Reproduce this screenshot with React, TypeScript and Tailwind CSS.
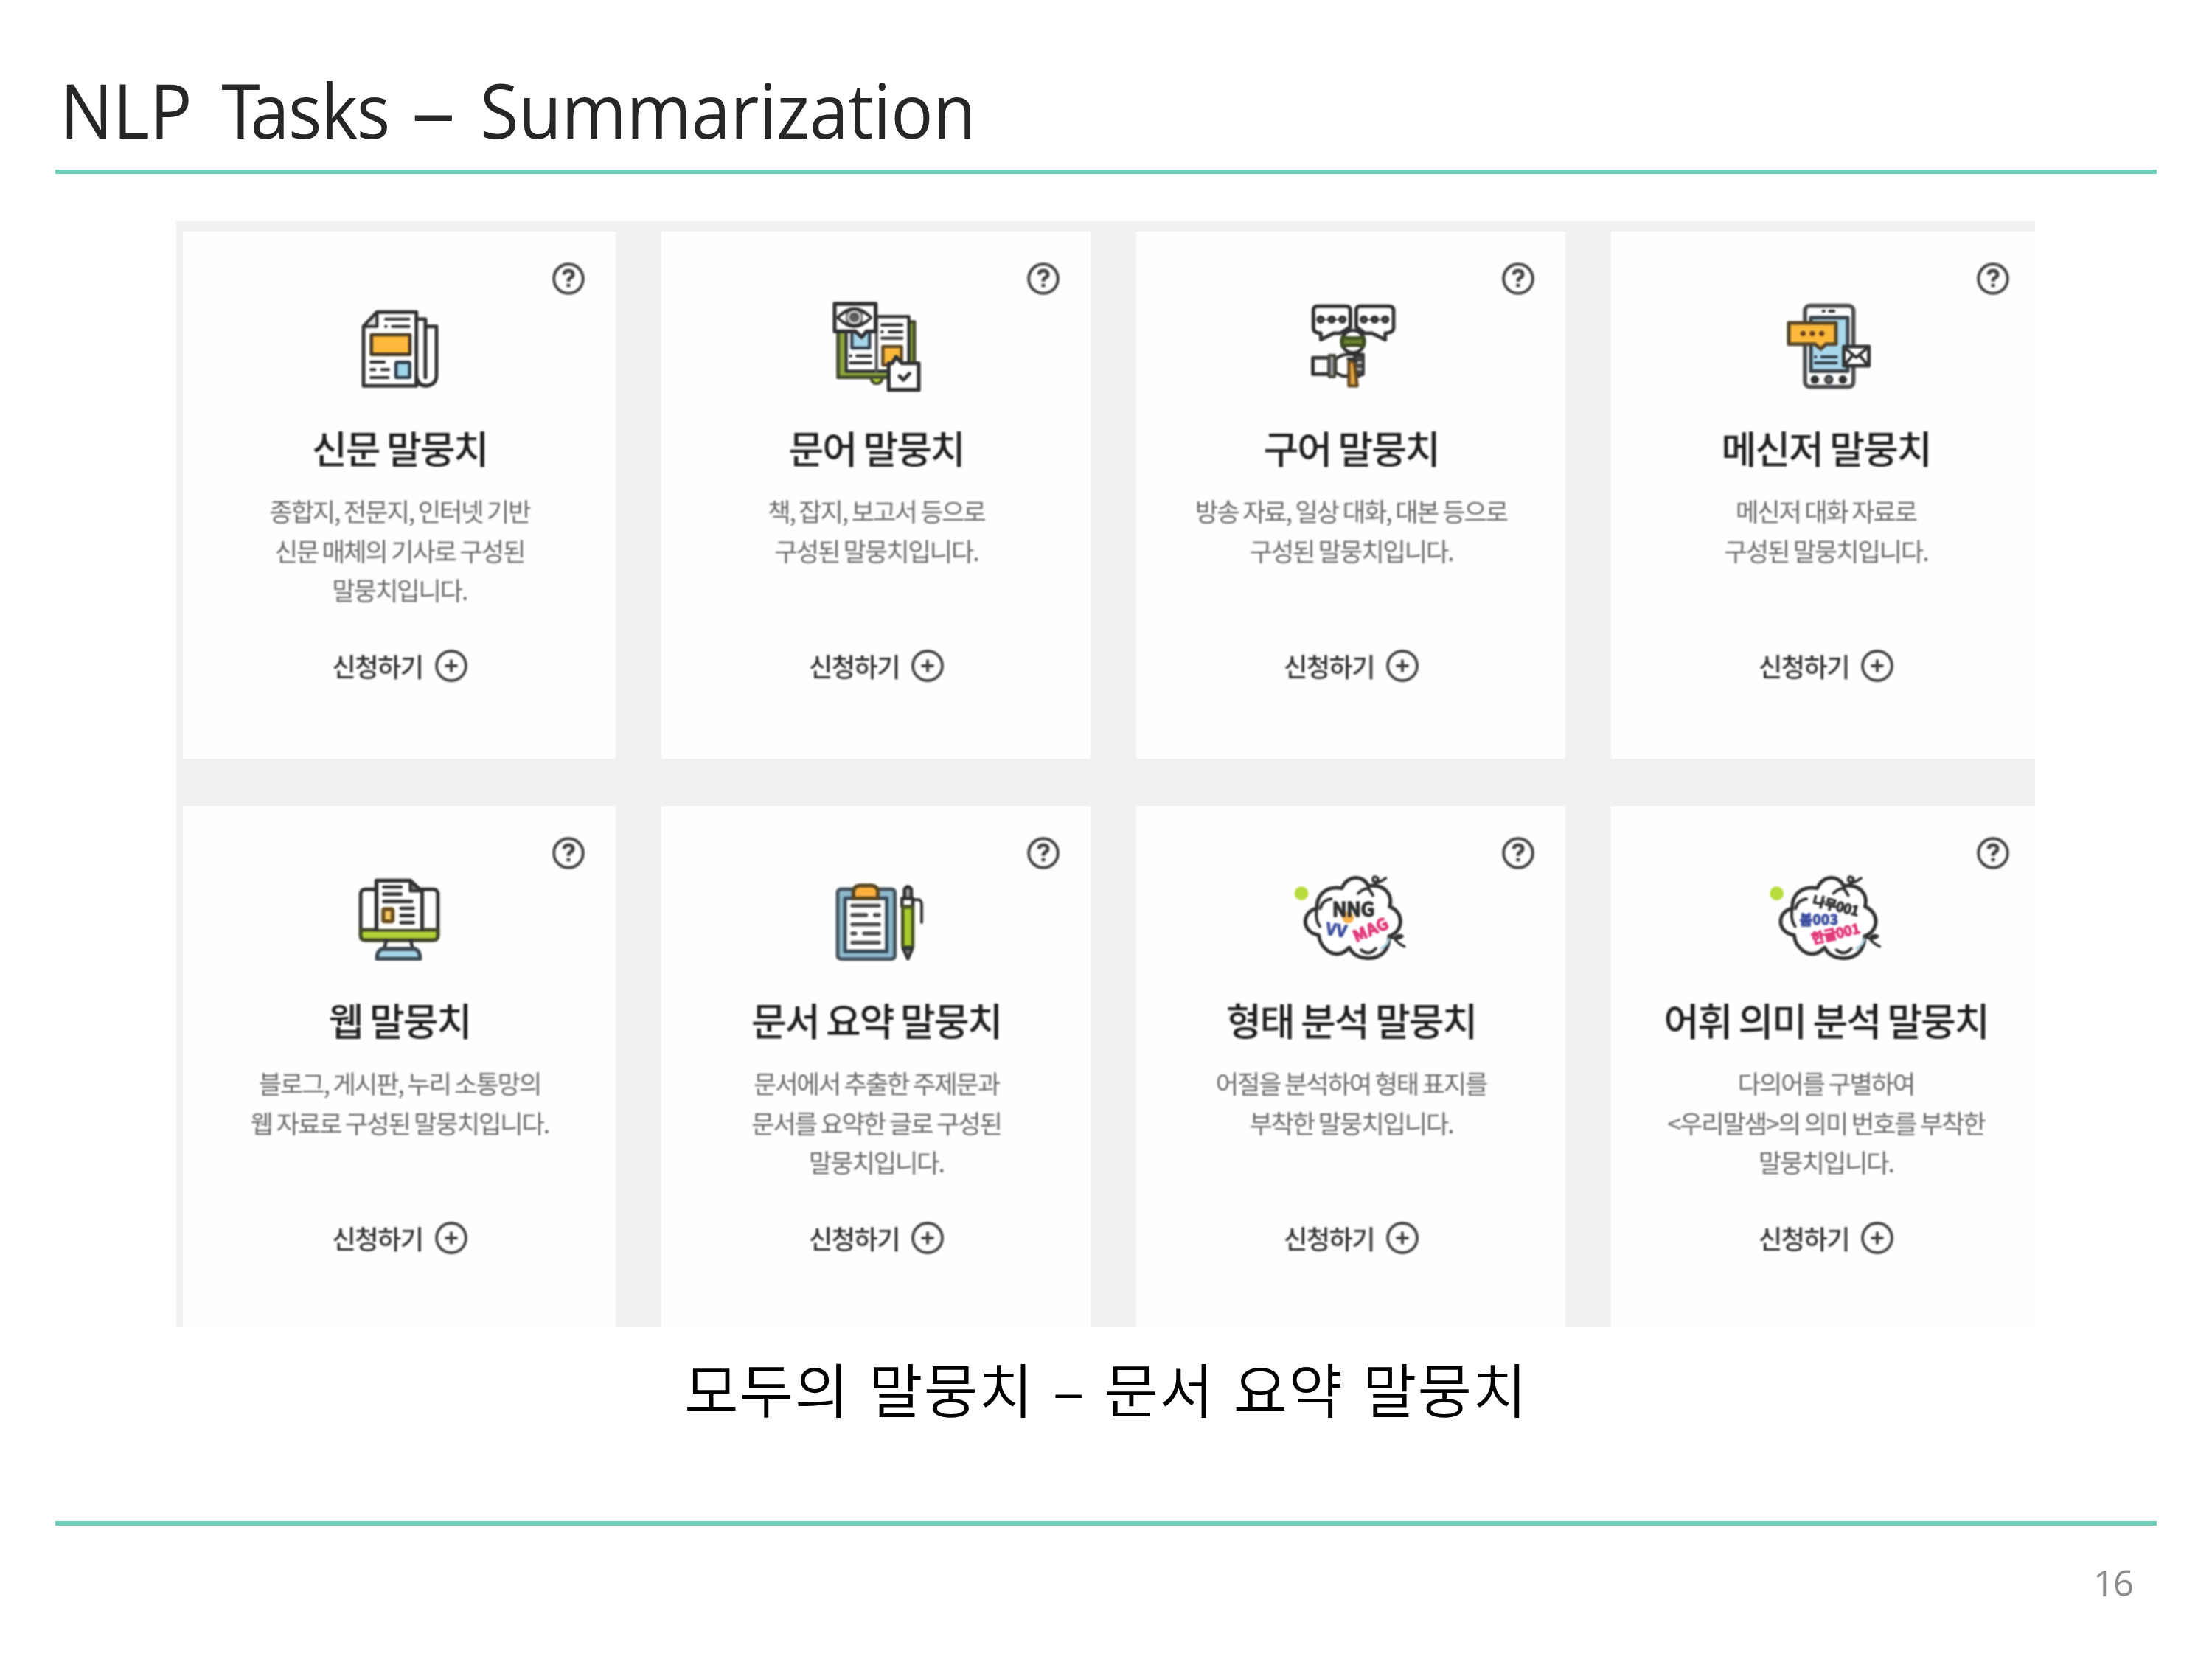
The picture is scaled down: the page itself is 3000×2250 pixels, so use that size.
import type { ReactNode } from "react";

const INK = "#303133";

function Icon({ x, children }: { x: number; children: ReactNode }) {
  return (
    <svg
      className="h-[160px] w-[190px] shrink-0"
      viewBox={`${x} 0 570 480`}
      fill="none"
      stroke={INK}
      strokeWidth={15}
      strokeLinejoin="round"
      strokeLinecap="round"
    >
      {children}
    </svg>
  );
}

function NewspaperIcon() {
  return (
    <Icon x={-38}>
      <path d="M155 100H315V400H100V158Z" fill="#fff" />
      <path d="M155 100V158H100Z" fill="#d8d8d8" strokeWidth={12} />
      <path d="M315 128H352V365M315 360q4 40 40 40q42-4 42-45V158H356" />
      <path d="M320 375q6 25 36 25" />
      <rect x="132" y="192" width="157" height="80" fill="#fbb83a" stroke="#493a26" strokeWidth={14} />
      <rect x="232" y="304" width="56" height="62" rx="5" fill="#9fd3ea" stroke="#33424f" strokeWidth={14} />
      <path d="M190 128H285M190 158H192M218 158H285M130 303H185M130 334H146M174 334H202M130 366H200" strokeWidth={12} />
    </Icon>
  );
}

function BookIcon() {
  return (
    <Icon x={-19}>
      <path d="M112 140H422V365H112Z" fill="#8aa63a" stroke="#454d2e" />
      <path d="M245 365q4 26 24 26t24-26Z" fill="#b4d333" stroke="#454d2e" strokeWidth={12} />
      <path d="M145 118H400V340H145Z" fill="#fff" strokeWidth={13} />
      <path d="M268 118V340" stroke="#55565a" strokeWidth={13} />
      <path d="M168 180H240V246H168Z" fill="#a5d6ea" stroke="#33424f" strokeWidth={13} />
      <path d="M294 240H370V315H294Z" fill="#fbb83a" stroke="#5b4520" strokeWidth={13} />
      <path d="M290 152H372M290 180H292M320 180H372M290 206H372M162 278H164M188 278H245M162 306H245" strokeWidth={12} />
      <path d="M98 66H265V178H228L208 202L182 178H98Z" fill="#fff" strokeWidth={16} />
      <path d="M112 122Q178 52 244 122Q178 192 112 122Z" fill="#6c6e70" strokeWidth={14} />
      <path d="M120 122L142 106V138ZM236 122L214 106V138Z" fill="#fff" stroke="#fff" strokeWidth={3} />
      <circle cx="178" cy="121" r="24" fill="#5a5c5e" stroke="#d5d6d7" strokeWidth={8} />
      <path d="M318 308H332L348 282L372 308H440V416H318Z" fill="#fff" strokeWidth={16} />
      <path d="M362 360L378 376L402 350" strokeWidth={15} />
    </Icon>
  );
}

function InterviewIcon() {
  return (
    <Icon x={-37}>
      <path d="M112 76H228q18 0 18 18V160L205 186H178L126 212V186Q96 184 96 165V94q0-18 16-18Z" fill="#fff" />
      <path d="M286 76H402q20 0 20 18V165Q420 184 388 186V212L335 186H305L270 160V94q0-18 16-18Z" fill="#fff" />
      <g fill="#55575a" strokeWidth={10}>
        <circle cx="125" cy="130" r="12" />
        <circle cx="170" cy="130" r="12" />
        <circle cx="214" cy="130" r="12" />
        <circle cx="301" cy="130" r="12" />
        <circle cx="345" cy="130" r="12" />
        <circle cx="388" cy="130" r="12" />
      </g>
      <path d="M137 130H202M313 130H376" strokeWidth={5} />
      <circle cx="257" cy="220" r="46" fill="#fff" strokeWidth={14} />
      <path d="M214 202Q257 210 300 202V238Q257 230 214 238Z" fill="#6d8730" stroke="#3f4d20" strokeWidth={14} />
      <path d="M94 286H160V352H94Z" fill="#fff" />
      <path d="M186 290Q215 270 240 272H298V350L280 360H215L186 346Z" fill="#fff" strokeWidth={13} />
      <path d="M262 275H298V355H275Z" fill="#4a4b4d" strokeWidth={10} />
      <path d="M262 305H290M265 332H290" stroke="#c7c8c9" strokeWidth={8} />
      <rect x="160" y="276" width="22" height="86" fill="#a9aaaf" stroke="#46483f" strokeWidth={12} />
      <path d="M240 300H262L274 400H240Z" fill="#e3a241" stroke="#63491f" strokeWidth={13} />
      <path d="M236 290H258L270 302" strokeWidth={11} />
    </Icon>
  );
}

function MessengerIcon() {
  return (
    <Icon x={-57}>
      <rect x="144" y="74" width="197" height="330" rx="20" fill="#fff" stroke="#4d4e51" strokeWidth={17} />
      <rect x="168" y="122" width="150" height="218" fill="#a8d7ec" stroke="#3b444b" strokeWidth={15} />
      <path d="M218 96H222M244 96H262" strokeWidth={12} />
      <path d="M186 282H188M212 282H272M186 306H272" stroke="#33424f" strokeWidth={12} />
      <path d="M78 144H270V230H230L208 250L184 230H78Z" fill="#fbb83a" stroke="#55452a" strokeWidth={15} />
      <g fill="#6b3f1f" stroke="none">
        <circle cx="136" cy="187" r="11" />
        <circle cx="174" cy="187" r="11" />
        <circle cx="212" cy="187" r="11" />
      </g>
      <rect x="302" y="240" width="102" height="78" fill="#fff" strokeWidth={15} />
      <path d="M304 244L352 284L400 244M304 316L336 278M400 316L368 278" strokeWidth={12} />
      <g fill={INK} strokeWidth={8}>
        <circle cx="184" cy="374" r="13" />
        <circle cx="241" cy="374" r="15" fill="#66676a" />
        <circle cx="298" cy="374" r="13" />
      </g>
    </Icon>
  );
}

function WebIcon() {
  return (
    <Icon x={-40.5}>
      <rect x="86" y="112" width="314" height="206" rx="18" fill="#fff" />
      <path d="M86 276H400V300q0 18-18 18H104q-18 0-18-18Z" fill="#b2d235" stroke="#444a2e" />
      <path d="M150 272V76H288L336 122V272" fill="#fff" strokeWidth={16} />
      <path d="M288 78V118H334Z" fill="#77787a" strokeWidth={13} />
      <path d="M180 102H250M180 131H250M180 161H294M250 189H300M250 218H300M250 247H300" strokeWidth={14} />
      <rect x="178" y="192" width="38" height="50" rx="5" fill="#f5c65a" stroke="#6a4d1e" strokeWidth={16} />
      <path d="M190 320L182 354M290 320L298 354" strokeWidth={14} />
      <path d="M172 354H308Q328 362 328 394H152Q152 362 172 354Z" fill="#a5d3e6" stroke="#3d4a53" strokeWidth={16} />
    </Icon>
  );
}

function ClipboardIcon() {
  return (
    <Icon x={-49}>
      <rect x="80" y="111" width="233" height="284" rx="14" fill="#8db9cd" stroke="#46545e" strokeWidth={15} />
      <rect x="110" y="148" width="170" height="216" fill="#fff" stroke="#3a4d5c" strokeWidth={15} />
      <path d="M140 178H248M140 216H196M232 216H248M140 254H248M140 291H152M188 291H248M140 328H248" stroke="#4d4e51" strokeWidth={16} />
      <path d="M144 148V118q4-20 26-22H218q22 2 26 22V148Z" fill="#fdb03e" stroke="#5a4825" strokeWidth={16} />
      <path d="M352 142V112q14-22 28 0V142" fill="#a0a1a3" strokeWidth={14} />
      <path d="M342 148H386V182H342Z" fill="#fff" strokeWidth={14} />
      <path d="M390 154H412Q422 158 422 175V246" strokeWidth={12} />
      <path d="M345 184H386V346H345Z" fill="#a9c92f" stroke="#4b5627" strokeWidth={14} />
      <path d="M346 352H385L366 396Z" fill="#77787a" strokeWidth={12} />
    </Icon>
  );
}

function Cloud({ children }: { children: ReactNode }) {
  return (
    <>
      <circle cx="75" cy="128" r="28" fill="#b7dc3c" stroke="none" />
      <path
        d="M240 107C262 52 328 52 348 98C410 88 448 130 434 182C496 206 490 284 432 302C434 356 400 392 345 392C308 390 282 374 270 348C240 382 206 380 180 360C158 342 148 322 146 298C72 286 76 200 138 190C136 130 180 96 240 107Z"
        fill="#fff"
        strokeWidth={15}
      />
      <path d="M400 352Q428 338 432 310" stroke="#a4cfdf" strokeWidth={9} />
      <path d="M152 190Q160 155 196 150M138 192Q130 235 150 262M306 128Q330 105 350 110L366 136M318 358Q348 385 378 352" strokeWidth={12} />
      <path d="M348 98Q390 92 386 66Q366 50 366 76Q385 92 418 66" strokeWidth={11} />
      <path d="M436 306Q470 318 486 302Q466 292 454 312Q468 332 494 344" strokeWidth={11} />
      {children}
    </>
  );
}

function MorphIcon() {
  return (
    <Icon x={-9}>
      <Cloud>
        <circle cx="265" cy="226" r="24" fill="#f7b04c" stroke="none" />
        <g strokeWidth="4" fontFamily="'Noto Sans CJK KR', sans-serif" fontWeight={700}>
          <text x="200" y="222" fontSize="80" textLength="174" fill="#2f3032" stroke="#2f3032">NNG</text>
          <text x="0" y="0" fontSize="66" textLength="84" fill="#3d4fa0" stroke="#3d4fa0" transform="translate(172 294) rotate(9)">VV</text>
          <text x="0" y="0" fontSize="66" textLength="150" fill="#e0397a" stroke="#e0397a" transform="translate(298 328) rotate(-24)">MAG</text>
        </g>
      </Cloud>
    </Icon>
  );
}

function SenseIcon() {
  return (
    <Icon x={3}>
      <g transform="translate(14 0)">
        <Cloud>
          <g strokeWidth="4" fontFamily="'Noto Sans CJK KR', sans-serif" fontWeight={700}>
            <text x="0" y="0" fontSize="54" textLength="192" fill="#2f3032" stroke="#2f3032" transform="translate(218 174) rotate(14)">나무001</text>
            <text x="0" y="0" fontSize="56" textLength="156" fill="#3d4fa0" stroke="#3d4fa0" transform="translate(168 255)">봄003</text>
            <text x="0" y="0" fontSize="56" textLength="200" fill="#e0397a" stroke="#e0397a" transform="translate(222 334) rotate(-13)">한글001</text>
          </g>
        </Cloud>
      </g>
    </Icon>
  );
}

function HelpIcon() {
  return (
    <svg className="h-[46px] w-[46px]" viewBox="0 0 46 46" fill="none" stroke="#424345">
      <circle cx="23" cy="23" r="19.8" strokeWidth="4" />
      <path d="M17 17.500q0.500-5.500 6-5.500t6 5q0 3-3.500 4.800q-2.500 1.300-2.500 5" strokeWidth="5" />
      <path d="M20.500 32h5" strokeWidth="4.600" />
    </svg>
  );
}

function PlusIcon() {
  return (
    <svg className="h-[46px] w-[46px]" viewBox="0 0 46 46" fill="none" stroke="#424345">
      <circle cx="23" cy="23" r="20" strokeWidth="3.8" />
      <path d="M14.500 23h17M23 14.500v17" strokeWidth="4" />
    </svg>
  );
}

type Corpus = { title: string; lines: string[]; icon: ReactNode };

const firstRow: Corpus[] = [
  { title: "신문 말뭉치", lines: ["종합지, 전문지, 인터넷 기반", "신문 매체의 기사로 구성된", "말뭉치입니다."], icon: <NewspaperIcon /> },
  { title: "문어 말뭉치", lines: ["책, 잡지, 보고서 등으로", "구성된 말뭉치입니다."], icon: <BookIcon /> },
  { title: "구어 말뭉치", lines: ["방송 자료, 일상 대화, 대본 등으로", "구성된 말뭉치입니다."], icon: <InterviewIcon /> },
  { title: "메신저 말뭉치", lines: ["메신저 대화 자료로", "구성된 말뭉치입니다."], icon: <MessengerIcon /> },
];

const secondRow: Corpus[] = [
  { title: "웹 말뭉치", lines: ["블로그, 게시판, 누리 소통망의", "웹 자료로 구성된 말뭉치입니다."], icon: <WebIcon /> },
  { title: "문서 요약 말뭉치", lines: ["문서에서 추출한 주제문과", "문서를 요약한 글로 구성된", "말뭉치입니다."], icon: <ClipboardIcon /> },
  { title: "형태 분석 말뭉치", lines: ["어절을 분석하여 형태 표지를", "부착한 말뭉치입니다."], icon: <MorphIcon /> },
  { title: "어휘 의미 분석 말뭉치", lines: ["다의어를 구별하여", "<우리말샘>의 의미 번호를 부착한", "말뭉치입니다."], icon: <SenseIcon /> },
];

function Card({ corpus, titleGap }: { corpus: Corpus; titleGap: string }) {
  return (
    <article className="relative bg-[#fefefe]">
      <div className="flex flex-col items-center pt-[76px] blur-[1.2px]">
        {corpus.icon}
        <h2 className={`${titleGap} h-[68px] whitespace-nowrap pl-px text-[52px] font-medium leading-[68px] tracking-[-0.041em] text-[#1f1f22]`}>
          {corpus.title}
        </h2>
        <div className="mt-[25px] h-[160px] pl-px text-center text-[34px] leading-[53.5px] tracking-[-0.06em] text-[#68686a]">
          {corpus.lines.map((line) => (
            <p key={line} className="whitespace-nowrap">{line}</p>
          ))}
        </div>
        <div className="mt-[54px] flex h-[46px] items-center gap-[15px] pl-[2px]">
          <span className="text-[35px] font-medium leading-[46px] tracking-[-0.04em] text-[#333335]">신청하기</span>
          <PlusIcon />
        </div>
      </div>
      <div className="absolute right-[41px] top-[41px] blur-[1.2px]">
        <HelpIcon />
      </div>
    </article>
  );
}

export default function App() {
  return (
    <main className="flex h-[2250px] w-[3000px] flex-col overflow-hidden bg-white font-['Noto_Sans_CJK_KR',sans-serif]">
      <header className="mx-[75px] flex h-[236px] w-[2850px] items-end border-b-[6px] border-[#6dcfba]">
        <h1 className="flex h-[156px] origin-left scale-x-[0.935] whitespace-nowrap pl-[7px] font-['Open_Sans',sans-serif] text-[102px] leading-[150px] text-[#262626]">
          <span>NLP&nbsp;</span>
          <span className="ml-[16px] tracking-[-0.14em]">T</span>
          <span className="tracking-[-0.015em]">asks&nbsp;</span>
          <span className="ml-[14px] inline-block scale-x-[1.25]">–</span>
          <span className="ml-[42px] tracking-[-0.002em]">Summarization</span>
        </h1>
      </header>
      <section className="ml-[239px] mt-[64px] grid h-[1500px] w-[2521px] grid-cols-[587px_582px_582px_582px] grid-rows-[715px_715px] gap-x-[62px] gap-y-[64px] overflow-hidden bg-[#f1f1f1] pl-[9px] pt-[14px]">
        {firstRow.map((corpus) => (
          <Card key={corpus.title} corpus={corpus} titleGap="mt-[23px]" />
        ))}
        {secondRow.map((corpus) => (
          <Card key={corpus.title} corpus={corpus} titleGap="mt-[20px]" />
        ))}
      </section>
      <p className="mt-[21px] h-[120px] whitespace-nowrap text-center text-[80px] font-[350] leading-[120px] tracking-[1.2px] text-black [word-spacing:6.5px]">
        모두의 말뭉치 – 문서 요약 말뭉치
      </p>
      <footer className="mx-[75px] mt-[122px] flex w-[2850px] justify-end border-t-[6px] border-[#6dcfba] pr-[32px] pt-[43px]">
        <span className="font-['Open_Sans',sans-serif] text-[49px] leading-[68px] tracking-[-0.02em] text-[#8b8b8b]">16</span>
      </footer>
    </main>
  );
}
